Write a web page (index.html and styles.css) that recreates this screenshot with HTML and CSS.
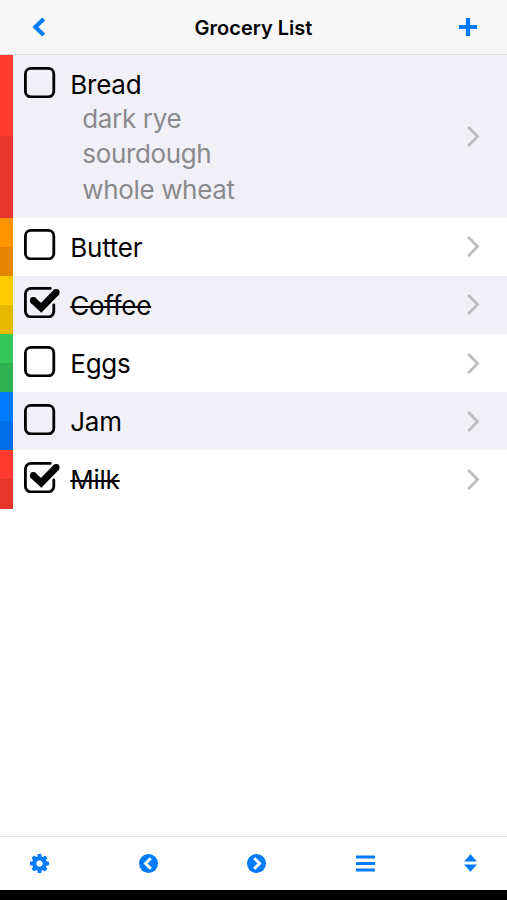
FILE: index.html
```html
<!DOCTYPE html>
<html lang="en">
<head>
    <meta charset="UTF-8">
    <meta name="viewport" content="width=device-width, initial-scale=1.0">
    <title>Grocery List</title>
    <link rel="stylesheet" href="styles.css">
</head>
<body>
    <!-- Shared icons -->
    <svg class="defs" width="0" height="0">
        <symbol id="box" viewBox="0 0 36 31">
            <rect x="1.4" y="1.4" width="28.4" height="28.4" rx="5.5" fill="none" stroke="#000" stroke-width="2.8"/>
        </symbol>
        <symbol id="box-checked" viewBox="0 0 36 31">
            <path d="M26.3 1.4H6.9a5.5 5.5 0 0 0-5.5 5.5v17.4a5.5 5.5 0 0 0 5.5 5.5h17.4a5.5 5.5 0 0 0 5.5-5.5V18" fill="none" stroke="#000" stroke-width="2.8" stroke-linecap="round"/>
            <path d="M9 13.2 17.2 20.8 32.4 5.300" fill="none" stroke="#000" stroke-width="7" stroke-linejoin="miter" stroke-linecap="butt"/>
            <circle cx="9.3" cy="13.5" r="3.4"/>
            <circle cx="32.2" cy="5.500" r="3.4"/>
        </symbol>
        <symbol id="chevron" viewBox="0 0 14 21">
            <path d="M2 1.8 10.5 10.5 2 19.2" fill="none" stroke="#bdbdc0" stroke-width="2.8" stroke-linecap="round"/>
        </symbol>
    </svg>

    <header class="navbar">
        <a class="nav-link"><svg width="14" height="20" viewBox="0 0 14 20"><path d="M11.7 2 3.4 10l8.3 8" fill="none" stroke="#007aff" stroke-width="4.2"/></svg></a>
        <h1>Grocery List</h1>
        <a class="nav-link"><svg width="18" height="18" viewBox="0 0 18 18"><path d="M9 2v14M2 9h14" fill="none" stroke="#007aff" stroke-width="4.2" stroke-linecap="square"/></svg></a>
    </header>

    <main>
        <ul class="list">
            <li class="item tall red">
                <svg class="check"><use href="#box"/></svg>
                <div class="text">
                    <div class="name">Bread</div>
                    <div class="notes">dark rye<br>sourdough<br>whole wheat</div>
                </div>
                <svg class="chevron"><use href="#chevron"/></svg>
            </li>
            <li class="item orange">
                <svg class="check"><use href="#box"/></svg>
                <div class="text"><div class="name">Butter</div></div>
                <svg class="chevron"><use href="#chevron"/></svg>
            </li>
            <li class="item yellow done">
                <svg class="check"><use href="#box-checked"/></svg>
                <div class="text"><div class="name">Coffee</div></div>
                <svg class="chevron"><use href="#chevron"/></svg>
            </li>
            <li class="item green">
                <svg class="check"><use href="#box"/></svg>
                <div class="text"><div class="name">Eggs</div></div>
                <svg class="chevron"><use href="#chevron"/></svg>
            </li>
            <li class="item blue">
                <svg class="check"><use href="#box"/></svg>
                <div class="text"><div class="name">Jam</div></div>
                <svg class="chevron"><use href="#chevron"/></svg>
            </li>
            <li class="item red done">
                <svg class="check"><use href="#box-checked"/></svg>
                <div class="text"><div class="name">Milk</div></div>
                <svg class="chevron"><use href="#chevron"/></svg>
            </li>
        </ul>
    </main>

    <footer class="toolbar">
        <svg width="19" height="19" viewBox="0 128 1536 1536"><path d="M1024 896q0-106-75-181t-181-75-181 75-75 181 75 181 181 75 181-75 75-181zm512-109v222q0 12-8 23t-20 13l-185 28q-19 54-39 91 35 50 107 138 10 12 10 25t-9 23q-27 37-99 108t-94 71q-12 0-26-9l-138-108q-44 23-91 38-16 136-29 186-7 28-36 28h-222q-14 0-24.5-8.5t-11.5-21.5l-28-184q-49-16-90-37l-141 107q-10 9-25 9-14 0-25-11-126-114-165-168-7-10-7-23 0-12 8-23 15-21 51-66.5t54-70.5q-27-50-41-99l-183-27q-13-2-21-12.5t-8-23.5v-222q0-12 8-23t19-13l186-28q14-46 39-92-40-57-107-138-10-12-10-24 0-10 9-23 26-36 98.5-107.5t94.5-71.5q13 0 26 10l138 107q44-23 91-38 16-136 29-186 7-28 36-28h222q14 0 24.5 8.5t11.5 21.5l28 184q49 16 90 37l142-107q9-9 24-9 13 0 25 10 129 119 165 170 7 8 7 22 0 12-8 23-15 21-51 66.5t-54 70.5q26 50 41 98l183 28q13 2 21 12.5t8 23.5z"/></svg>
        <svg width="19" height="19" viewBox="0 0 19 19"><circle cx="9.5" cy="9.5" r="9.5"/><path d="M11.8 4.2 6.5 9.5l5.3 5.3" fill="none" stroke="#fff" stroke-width="3"/></svg>
        <svg width="19" height="19" viewBox="0 0 19 19"><circle cx="9.5" cy="9.5" r="9.5"/><path d="M7.2 4.2l5.3 5.3-5.3 5.3" fill="none" stroke="#fff" stroke-width="3"/></svg>
        <svg width="19" height="17" viewBox="0 0 19 17"><rect y="0.5" width="19" height="3" rx="0.6"/><rect y="7" width="19" height="3" rx="0.6"/><rect y="13.500" width="19" height="3" rx="0.6"/></svg>
        <svg width="13" height="18" viewBox="0 0 13 18"><path d="M6.5 0.300 13 7.600H0zM0 10.600H13L6.5 17.700z"/></svg>
    </footer>
    <div class="home-bar"></div>
</body>
</html>
```
FILE: styles.css
```css
* {
    box-sizing: border-box;
}
body {
    margin: 0;
    height: 900px;
    display: flex;
    flex-direction: column;
    overflow: hidden;
    background: #fff;
    color: #000;
    font-family: Inter, "Liberation Sans", sans-serif;
}
svg {
    display: block;
}
.defs {
    position: absolute;
}

/* Top bar */
.navbar {
    height: 55px;
    flex: none;
    display: flex;
    align-items: center;
    justify-content: space-between;
    padding: 0 30px 0 32px;
    background: #f7f7f8;
    border-bottom: 1px solid #dedee0;
}
.navbar h1 {
    margin: 1px 0 0 2px;
    font-size: 20px;
    font-weight: 600;
    letter-spacing: 0;
}

/* List */
main {
    flex: 1;
}
.list {
    list-style: none;
    margin: 0;
    padding: 0;
}
.item {
    display: flex;
    align-items: center;
    height: 58.2px;
    padding-right: 26.5px;
    background: #fff;
}
.item:nth-child(odd) {
    background: #f1f0f6;
}
.item::before {
    content: "";
    align-self: stretch;
    width: 13.3px;
    flex: none;
    background: linear-gradient(var(--light) 50%, var(--dark) 50%);
}
.item.tall {
    height: 162.6px;
}
.red {
    --light: #ff3b30;
    --dark: #e6352b;
}
.orange {
    --light: #ff9500;
    --dark: #e68600;
}
.yellow {
    --light: #ffcc00;
    --dark: #e6b800;
}
.green {
    --light: #34c759;
    --dark: #2fb350;
}
.blue {
    --light: #007aff;
    --dark: #006ee6;
}
.check {
    align-self: flex-start;
    width: 36px;
    height: 31px;
    flex: none;
    margin: 11.6px 10.3px 0 10.7px;
}
.text {
    align-self: flex-start;
    flex: 1;
    padding-top: 12px;
}
.name {
    font-size: 26px;
    line-height: 35px;
    letter-spacing: -0.25px;
}
.done .name {
    text-decoration: line-through;
    text-decoration-thickness: 2px;
}
.notes {
    margin-top: -1px;
    padding-left: 12px;
    font-size: 26px;
    line-height: 35.4px;
    letter-spacing: -0.35px;
    color: #8a8a8e;
}
.chevron {
    width: 14px;
    height: 21px;
}

/* Bottom bar */
.toolbar {
    height: 54px;
    flex: none;
    display: flex;
    align-items: center;
    justify-content: space-between;
    padding: 0 30px 1px;
    border-top: 1px solid #e2e2e4;
    fill: #007aff;
}
.home-bar {
    height: 10px;
    flex: none;
    background: #000;
}
```
